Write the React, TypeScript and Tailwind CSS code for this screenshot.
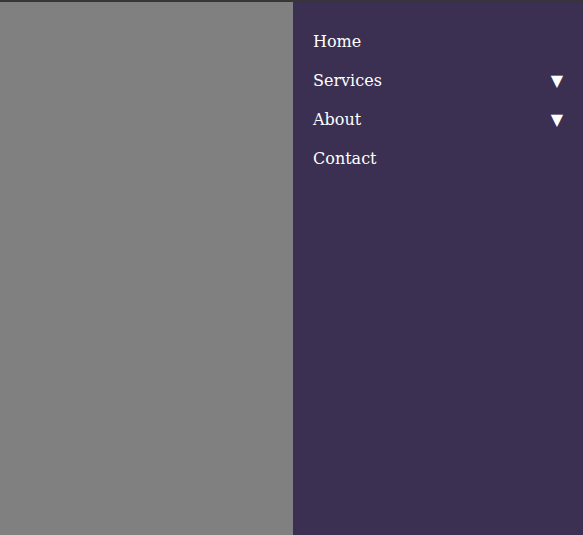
const items = [
  { label: "Home", sub: false },
  { label: "Services", sub: true },
  { label: "About", sub: true },
  { label: "Contact", sub: false },
];

export default function App() {
  return (
    <div className="flex h-[535px] w-[583px] flex-col bg-[#808080] font-['DejaVu_Serif',serif]">
      <div className="h-[2px] bg-[#363636]" />
      <div className="flex flex-1">
        <div className="flex-1" />
        <nav className="w-[290px] bg-[#3b3052] pt-5 text-white">
          <ul>
            {items.map((item) => (
              <li key={item.label} className="flex h-[39px] items-center justify-between px-5 text-base">
                <span>{item.label}</span>
                {item.sub && <span>▼</span>}
              </li>
            ))}
          </ul>
        </nav>
      </div>
    </div>
  );
}
